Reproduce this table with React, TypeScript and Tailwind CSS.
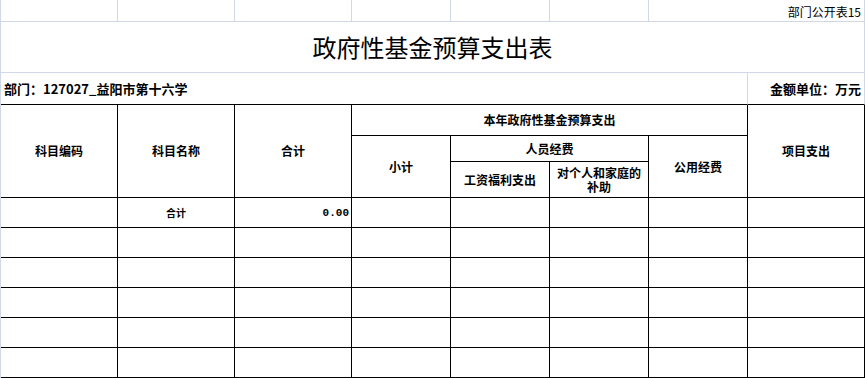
const light = "border-[#d0d7e5]";

const Top = ({ span = "", children }: { span?: string; children?: React.ReactNode }) => (
  <div className={`border-r border-b ${light} ${span} flex items-end justify-end pr-[3px] pb-[2px] text-[12px] leading-[14px]`}>
    {children}
  </div>
);

const Head = ({ span = "", children }: { span?: string; children?: React.ReactNode }) => (
  <div className={`border-r border-b border-black ${span} flex items-center justify-center text-center font-bold text-[12px] leading-[14px] px-1`}>
    {children}
  </div>
);

const Cell = ({ className = "", children }: { className?: string; children?: React.ReactNode }) => (
  <div className={`border-r border-b border-black flex items-center ${className}`}>{children}</div>
);

export default function App() {
  const emptyRows = [0, 1, 2, 3, 4];
  return (
    <div className={`w-[865px] h-[378px] bg-white border-l ${light} text-black font-['Noto_Sans_CJK_SC',sans-serif] overflow-hidden`}>
      <div className="grid grid-cols-[117px_117px_117px_99px_99px_99px_99px_117px] grid-rows-[22px_51px_32px_31px_26px_36px_30px_30px_30px_30px_30px_30px]">
        {/* sheet top row */}
        <Top />
        <Top />
        <Top />
        <Top />
        <Top />
        <Top />
        <Top span="col-span-2">部门公开表15</Top>

        {/* title */}
        <div className={`col-span-8 border-r border-b ${light} flex items-center justify-center text-[24px] leading-[28px]`}>
          政府性基金预算支出表
        </div>

        {/* department row */}
        <div className={`col-span-7 border-r ${light} border-b border-b-black flex items-center pl-[3px] font-bold text-[13px] leading-[16px]`}>
          部门：127027_益阳市第十六学
        </div>
        <div className={`border-r ${light} border-b border-b-black flex items-center justify-end pr-[3px] font-bold text-[13px] leading-[16px]`}>
          金额单位：万元
        </div>

        {/* header */}
        <Head span="row-span-3">科目编码</Head>
        <Head span="row-span-3">科目名称</Head>
        <Head span="row-span-3">合计</Head>
        <Head span="col-span-4">本年政府性基金预算支出</Head>
        <Head span="row-span-3">项目支出</Head>
        <Head span="row-span-2">小计</Head>
        <Head span="col-span-2">人员经费</Head>
        <Head span="row-span-2">公用经费</Head>
        <Head>工资福利支出</Head>
        <Head>
          对个人和家庭的
          <br />
          补助
        </Head>

        {/* total row */}
        <Cell />
        <Cell className="justify-center font-bold text-[10px] leading-[12px]">合计</Cell>
        <Cell className="justify-end pr-[2px] font-bold text-[11px] leading-[12px] font-['Liberation_Mono',monospace]">0.00</Cell>
        <Cell />
        <Cell />
        <Cell />
        <Cell />
        <Cell />

        {emptyRows.map((r) =>
          [0, 1, 2, 3, 4, 5, 6, 7].map((c) => <Cell key={`${r}-${c}`} />)
        )}
      </div>
    </div>
  );
}
